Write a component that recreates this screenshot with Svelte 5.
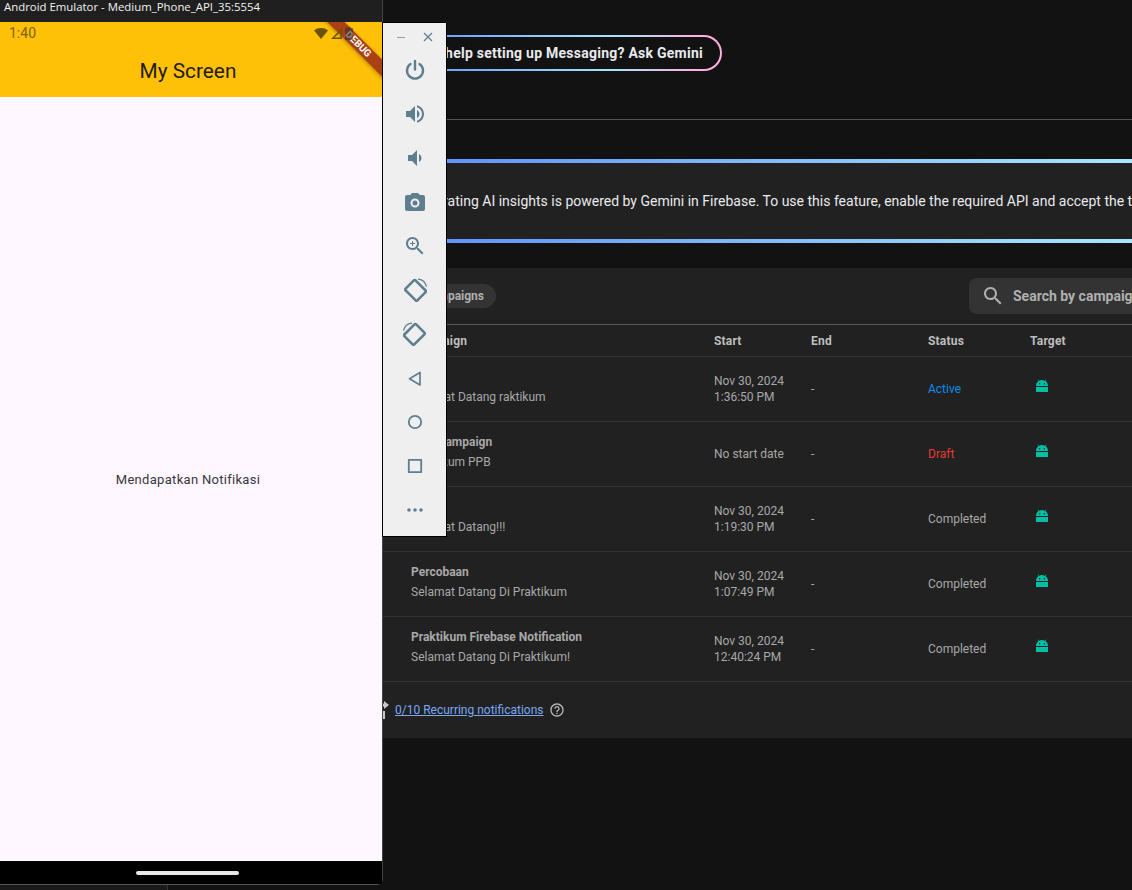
<script>
	const rows = [
		{ title: 'Test', body: 'Selamat Datang raktikum', date: ['Nov 30, 2024', '1:36:50 PM'], status: 'Active', tone: 'active' },
		{ title: 'Test Campaign', body: 'Praktikum PPB', date: ['No start date'], status: 'Draft', tone: 'draft' },
		{ title: 'Test', body: 'Selamat Datang!!!', date: ['Nov 30, 2024', '1:19:30 PM'], status: 'Completed', tone: '' },
		{ title: 'Percobaan', body: 'Selamat Datang Di Praktikum', date: ['Nov 30, 2024', '1:07:49 PM'], status: 'Completed', tone: '' },
		{ title: 'Praktikum Firebase Notification', body: 'Selamat Datang Di Praktikum!', date: ['Nov 30, 2024', '12:40:24 PM'], status: 'Completed', tone: '' }
	];

	const tools = [
		{ d: 'M12 3v8.500M7.500 6a8 8 0 1 0 9 0', stroke: true, width: 2.4 },
		{ d: 'M3 9v6h4l5 5V4L7 9H3zm13.5 3c0-1.77-1.02-3.29-2.5-4.03v8.05c1.48-.73 2.5-2.25 2.5-4.02zM14 3.23v2.06c2.89.86 5 3.54 5 6.71s-2.11 5.85-5 6.71v2.06c4.01-.91 7-4.49 7-8.77s-2.99-7.86-7-8.77z' },
		{ d: 'M18.5 12c0-1.77-1.02-3.29-2.5-4.03v8.05c1.48-.73 2.5-2.25 2.5-4.02zM5 9v6h4l5 5V4L9 9H5z' },
		{ d: 'M9 3L7.17 5H4c-1.1 0-2 .9-2 2v12c0 1.1.9 2 2 2h16c1.1 0 2-.9 2-2V7c0-1.1-.9-2-2-2h-3.17L15 3H9zm3 14.5a4.5 4.5 0 1 1 0-9 4.5 4.5 0 0 1 0 9zm0-2a2.5 2.5 0 1 0 0-5 2.5 2.5 0 0 0 0 5z' },
		{ d: 'M15.5 14h-.79l-.28-.27C15.41 12.59 16 11.11 16 9.5 16 5.91 13.09 3 9.5 3S3 5.91 3 9.5 5.91 16 9.5 16c1.61 0 3.09-.59 4.23-1.57l.27.28v.79l5 4.99L20.49 19l-4.99-5zm-6 0C7.01 14 5 11.99 5 9.5S7.01 5 9.5 5 14 7.01 14 9.5 11.99 14 9.5 14zM12 10h-2v2H9v-2H7V9h2V7h1v2h2v1z' },
		{ d: 'M10.800 2.400 2.600 10.600a1.200 1.200 0 0 0 0 1.700l10.100 10.100a1.200 1.200 0 0 0 1.700 0l8.200-8.200a1.200 1.200 0 0 0 0-1.700L12.500 2.400a1.200 1.200 0 0 0-1.700 0z', arc: 'M15.500 1.200a9.500 9.500 0 0 1 7.800 7', stroke: true, width: 2.6 },
		{ d: 'M13.200 2.400l8.200 8.200a1.200 1.200 0 0 1 0 1.700L11.300 22.400a1.200 1.200 0 0 1-1.700 0l-8.200-8.200a1.200 1.200 0 0 1 0-1.700L11.500 2.400a1.200 1.200 0 0 1 1.700 0z', arc: 'M8.500 1.200A9.500 9.500 0 0 0 .7 8.200', stroke: true, width: 2.6 },
		{ d: 'M17 6.500v12.500L6.500 12.700z', stroke: true, width: 1.7 },
		{ d: 'M12 5.800a6.200 6.200 0 1 0 0 12.400 6.200 6.200 0 0 0 0-12.400z', stroke: true, width: 1.8 },
		{ d: 'M5.800 5.800h12.400v12.400H5.800z', stroke: true, width: 1.8 },
		{ d: 'M6 10.200a1.800 1.800 0 1 0 0 3.600 1.800 1.800 0 0 0 0-3.600zm6 0a1.800 1.800 0 1 0 0 3.600 1.800 1.800 0 0 0 0-3.600zm6 0a1.800 1.800 0 1 0 0 3.600 1.800 1.800 0 0 0 0-3.600z' }
	];
</script>

<div class="desktop">
	<main class="console">
		<div class="ask-row">
			<div class="ask">Need help setting up Messaging? Ask Gemini</div>
		</div>
		<hr class="rule" />

		<section class="insights">
			<p>Generating AI insights is powered by Gemini in Firebase. To use this feature, enable the required API and accept the terms of service.</p>
		</section>

		<section class="card">
			<div class="filters">
				<span class="chip">Campaigns</span>
				<div class="search">
					<svg viewBox="0 0 24 24" width="24" height="24"><path fill="#b0b0b0" d="M15.5 14h-.79l-.28-.27C15.41 12.59 16 11.11 16 9.5 16 5.91 13.09 3 9.5 3S3 5.91 3 9.5 5.91 16 9.5 16c1.61 0 3.09-.59 4.23-1.57l.27.28v.79l5 4.99L20.49 19l-4.99-5zm-6 0C7.01 14 5 11.99 5 9.5S7.01 5 9.5 5 14 7.01 14 9.5 11.99 14 9.5 14z" /></svg>
					<span>Search by campaign name</span>
				</div>
			</div>

			<div class="row head">
				<span>Campaign</span>
				<span>Start</span>
				<span>End</span>
				<span>Status</span>
				<span>Target</span>
			</div>

			{#each rows as row}
				<div class="row">
					<div class="campaign">
						<b>{row.title}</b>
						<span>{row.body}</span>
					</div>
					<div class="date">
						{#each row.date as line}
							<div>{line}</div>
						{/each}
					</div>
					<div>-</div>
					<div class="status {row.tone}">{row.status}</div>
					<div class="target">
						<svg viewBox="0 0 14 13" width="14" height="13">
							<path fill="#00bfa5" d="M1 7C1 4.600 2.200 3 3.400 2.300L2.600.7 3.200.4 4 1.900a6.400 6.400 0 0 1 6 0L10.800.4l.6.3-.8 1.600C11.800 3 13 4.600 13 7z" />
							<rect x="1" y="8" width="12" height="5" fill="#00bfa5" />
							<circle cx="4.600" cy="4.800" r=".7" fill="#212121" />
							<circle cx="9.400" cy="4.800" r=".7" fill="#212121" />
						</svg>
					</div>
				</div>
			{/each}

			<div class="foot">
				<svg class="recur" viewBox="0 0 20 20" width="20" height="20">
					<path fill="none" stroke="#c8c8c8" stroke-width="2" d="M2 11v7h12v-7" />
					<path fill="#c8c8c8" d="M14 1l5 4-5 4V6.500H9V3.500h5z" />
				</svg>
				<a href="#recurring">0/10 Recurring notifications</a>
				<svg viewBox="0 0 24 24" width="16" height="16"><path fill="#b8b8b8" d="M11 18h2v-2h-2v2zm1-16C6.480 2 2 6.480 2 12s4.480 10 10 10 10-4.480 10-10S17.520 2 12 2zm0 18c-4.410 0-8-3.590-8-8s3.590-8 8-8 8 3.590 8 8-3.590 8-8 8zm0-14c-2.210 0-4 1.790-4 4h2c0-1.100.9-2 2-2s2 .9 2 2c0 2-3 1.750-3 5h2c0-2.250 3-2.500 3-5 0-2.210-1.790-4-4-4z" /></svg>
			</div>
		</section>
	</main>

	<div class="emulator">
		<div class="titlebar">Android Emulator - Medium_Phone_API_35:5554</div>
		<div class="appbar">
			<div class="ribbon"><span>DEBUG</span></div>
			<div class="statusbar">
				<span>1:40</span>
				<div class="status-icons">
					<svg viewBox="0 0 14 11" width="14" height="11"><path fill="#6b5200" d="M0 2.500C3.800-.8 10.200-.8 14 2.500L7 11z" /></svg>
					<svg viewBox="0 0 11 11" width="11" height="11"><path fill="none" stroke="#6b5200" stroke-width="1.500" d="M1.800 10.200 10.200 1.800v8.400z" /></svg>
					<svg viewBox="0 0 8 13" width="8" height="13"><path fill="#3a3028" fill-opacity="0.6" d="M2.500 0h3v1H7a1 1 0 0 1 1 1v10a1 1 0 0 1-1 1H1a1 1 0 0 1-1-1V2a1 1 0 0 1 1-1h1.500z" /></svg>
				</div>
			</div>
			<h1>My Screen</h1>
		</div>
		<div class="screen">Mendapatkan Notifikasi</div>
		<div class="navbar"><i></i></div>
	</div>

	<aside class="toolbar">
		<div class="win">
			<svg viewBox="0 0 10 10" width="10" height="10"><path stroke="#8ea2ad" stroke-width="1" d="M1 5.500h8" /></svg>
			<svg viewBox="0 0 10 10" width="10" height="10"><path stroke="#5f7f8f" stroke-width="1.200" d="M1 1l8 8M9 1 1 9" /></svg>
		</div>
		{#each tools as t}
			<div class="tool">
				<svg viewBox="0 0 24 24" width="24" height="24">
					{#if t.stroke}
						<path fill="none" stroke="#5f7f8f" stroke-width={t.width} stroke-linecap="round" stroke-linejoin="round" d={t.d} />
						{#if t.arc}
							<path fill="none" stroke="#5f7f8f" stroke-width="1.3" stroke-linecap="round" d={t.arc} />
						{/if}
					{:else}
						<path fill="#5f7f8f" d={t.d} />
					{/if}
				</svg>
			</div>
		{/each}
	</aside>

	<div class="under"></div>
</div>

<style>
	:global(body) {
		background: #121212;
	}
	.desktop {
		position: relative;
		width: 1132px;
		height: 890px;
		overflow: hidden;
		background: #121212;
		font-family: Roboto, sans-serif;
	}

	/* browser window behind the emulator */
	.console {
		position: absolute;
		left: 383px;
		top: 0;
		width: 1100px;
		height: 890px;
	}
	.ask-row {
		display: flex;
		padding-top: 35px;
		height: 119px;
		box-sizing: border-box;
	}
	.ask {
		height: 36px;
		width: 339px;
		box-sizing: border-box;
		border: 2px solid transparent;
		border-radius: 18px;
		padding-right: 17px;
		background: linear-gradient(#121212, #121212) padding-box,
			linear-gradient(90deg, #5a8cff 0%, #a8e4fb 68%, #ffb0e0 92%, #ffb0e0 100%) border-box;
		color: #e8eaed;
		font-size: 14px;
		font-weight: 700;
		letter-spacing: 0.25px;
		line-height: 32px;
		text-align: right;
		white-space: nowrap;
	}
	.rule {
		margin: 0 0 39px;
		border: 0;
		border-top: 1px solid #555;
	}
	.insights {
		height: 84px;
		box-sizing: border-box;
		border-top: 4px solid;
		border-bottom: 4px solid;
		border-image: linear-gradient(90deg, #5b8cff 0, #a8e6ff 749px) 1;
		background: #212121;
		padding-left: 28px;
		display: flex;
		align-items: center;
		margin-bottom: 25px;
	}
	.insights p {
		margin: 0;
		color: #e8eaed;
		font-size: 14px;
		white-space: nowrap;
	}
	.card {
		background: #212121;
		height: 470px;
		color: #a8a8a8;
		font-size: 12px;
	}
	.filters {
		height: 57px;
		box-sizing: border-box;
		border-bottom: 1px solid #5a5a5a;
		display: flex;
		align-items: center;
	}
	.chip {
		width: 113px;
		height: 24px;
		box-sizing: border-box;
		background: #333;
		border-radius: 12px;
		padding-right: 12px;
		color: #b0b0b0;
		font-weight: 700;
		font-size: 12px;
		line-height: 24px;
		text-align: right;
	}
	.search {
		margin-left: 473px;
		width: 400px;
		height: 36px;
		box-sizing: border-box;
		background: #333;
		border-radius: 8px;
		padding-left: 12px;
		display: flex;
		align-items: center;
		gap: 8px;
		color: #b0b0b0;
		font-size: 14px;
		font-weight: 700;
	}
	.row {
		display: grid;
		grid-template-columns: 331px 97px 117px 102px 1fr;
		align-items: center;
		height: 65px;
		box-sizing: border-box;
		border-bottom: 1px solid #333;
	}
	.row > :first-child {
		padding-left: 28px;
	}
	.row.head {
		height: 32px;
		color: #bdbdbd;
		font-weight: 700;
		letter-spacing: 0.2px;
	}
	.campaign {
		display: flex;
		flex-direction: column;
		line-height: 20px;
		padding-bottom: 4px;
	}
	.campaign b {
		font-weight: 700;
	}
	.date {
		line-height: 16px;
	}
	.status.active {
		color: #0b8ce9;
	}
	.status.draft {
		color: #e53935;
	}
	.target {
		padding: 0 0 8px 5px;
		line-height: 0;
	}
	.foot {
		height: 56px;
		display: flex;
		align-items: center;
		gap: 5px;
	}
	.recur {
		margin-left: -13px;
		flex: none;
	}
	.foot a {
		color: #79a8f5;
	}

	/* emulator window */
	.emulator {
		position: absolute;
		left: 0;
		top: 0;
		width: 383px;
		height: 885px;
		box-sizing: border-box;
		display: flex;
		flex-direction: column;
		background: #000;
		border-right: 1px solid #444;
		border-bottom: 1px solid #555;
		border-bottom-right-radius: 6px;
	}
	.titlebar {
		height: 22px;
		flex: none;
		background: #1f1f1f;
		color: #f2f2f2;
		font-family: 'Open Sans', sans-serif;
		font-size: 11.4px;
		line-height: 14px;
		padding-left: 4px;
		white-space: nowrap;
	}
	.appbar {
		position: relative;
		height: 75px;
		flex: none;
		background: #ffc107;
		overflow: hidden;
	}
	.statusbar {
		position: relative;
		display: flex;
		justify-content: space-between;
		align-items: center;
		height: 22px;
		padding: 0 29px 0 9px;
		color: #806000;
		font-size: 14px;
	}
	.status-icons {
		display: flex;
		align-items: center;
		gap: 3px;
	}
	.appbar h1 {
		position: relative;
		margin: 13px 0 0;
		padding-right: 6px;
		color: #1f1b16;
		font-size: 20.8px;
		font-weight: 400;
		line-height: 28px;
		text-align: center;
	}
	.ribbon {
		position: absolute;
		right: -38px;
		top: 18px;
		width: 120px;
		height: 12px;
		background: #ab4015;
		box-shadow: 0 1px 4px rgba(0, 0, 0, 0.35);
		transform: rotate(45deg);
		text-align: center;
		color: #fff;
		font-size: 10px;
		font-weight: 700;
		line-height: 12px;
		padding-right: 5px;
		box-sizing: border-box;
	}
	.screen {
		flex: 1;
		padding-right: 6px;
		background: #fef7ff;
		color: #3a3640;
		font-size: 13px;
		letter-spacing: 0.3px;
		display: flex;
		align-items: center;
		justify-content: center;
	}
	.navbar {
		height: 23px;
		flex: none;
		padding-right: 8px;
		background: #000;
		display: flex;
		align-items: center;
		justify-content: center;
	}
	.navbar i {
		width: 103px;
		height: 4px;
		border-radius: 2px;
		background: #e8e8e8;
	}

	/* emulator side toolbar */
	.toolbar {
		position: absolute;
		left: 382px;
		top: 22px;
		width: 65px;
		height: 515px;
		box-sizing: border-box;
		background: #efefef;
		border: 1px solid #000;
		display: flex;
		flex-direction: column;
		align-items: center;
	}
	.win {
		width: 100%;
		height: 25px;
		padding: 3px 13px 0 13px;
		box-sizing: border-box;
		display: flex;
		justify-content: space-between;
		align-items: center;
	}
	.tool {
		height: 44px;
		flex: none;
		display: flex;
		align-items: center;
		justify-content: center;
	}
	.under {
		position: absolute;
		left: 0;
		top: 885px;
		width: 167px;
		height: 5px;
		background: #1a1a1a;
		border-right: 1px solid #333;
	}
</style>
